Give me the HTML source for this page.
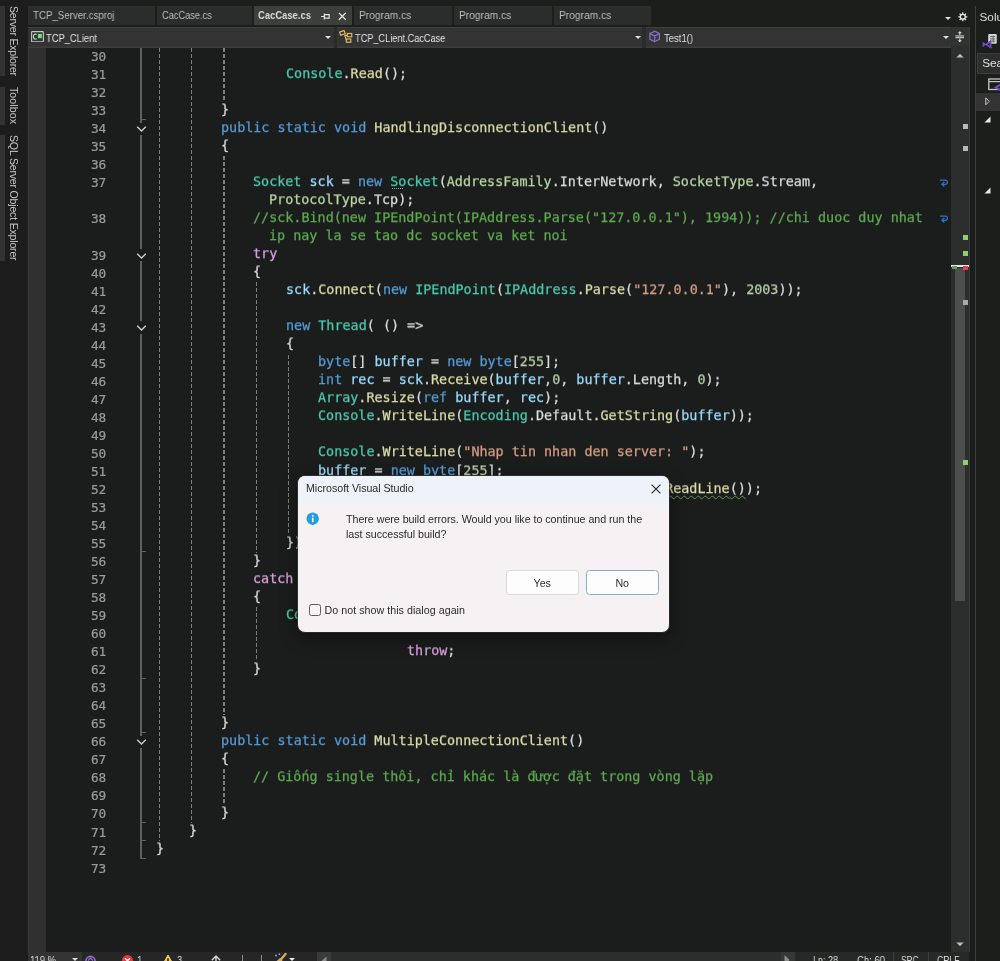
<!DOCTYPE html>
<html lang="en"><head><meta charset="utf-8"><title>Microsoft Visual Studio</title>
<style>
*{box-sizing:border-box;margin:0;padding:0}
html,body{width:1000px;height:961px;overflow:hidden;background:#1b1d1c}
body{position:relative;font-family:"Liberation Sans","DejaVu Sans",sans-serif;color:#d6d6d6;font-size:11.4px}
.abs,.ln,.cl,.g,.ov,.ot,.oc,.tab,.vt,.bar,.nv,.mk,.st{position:absolute}
.tab,.nv,.vt,.st,#dlg,#rp{will-change:transform}
/* shell */
#top{left:0;top:0;width:1000px;height:48px;background:#1c1e1c}
#left{left:0;top:0;width:28px;height:961px;background:#1c1d1c}
.bar{left:0;width:4.8px;background:#323432}
.vt{left:7.3px;width:14px;white-space:nowrap;transform-origin:0 0;transform:translateX(14px) rotate(90deg);color:#c8c8c8;font-size:10.6px;line-height:14px;height:14px}
.tab{top:6.2px;height:19.2px;background:#2a2d2b;color:#bdbdbd;font-size:11px;line-height:19.6px;padding-left:5px;white-space:nowrap;overflow:hidden}
.tx{display:inline-block;transform-origin:0 50%;will-change:transform}
#tb1 .tx{transform:scaleX(.883)}#tb2 .tx{transform:scaleX(.84)}#tb3 .tx{transform:scaleX(.858)}#tb4 .tx,#tb5 .tx,#tb6 .tx{transform:scaleX(.93)}
.nv,.st{transform-origin:0 50%}#nv1{transform:scaleX(.851)}#nv2{transform:scaleX(.835)}#nv3{transform:scaleX(.862)}
#vt1{letter-spacing:-.25px}#vt2{letter-spacing:.07px}#vt3{letter-spacing:-.21px}
#st1{transform:scaleX(.856)}#st2{transform:scaleX(.82)}#st3{transform:scaleX(.864)}#st4{transform:scaleX(.78)}#st5{transform:scaleX(.78)}.st{transform:scaleX(.86)}
.tab.act{background:#3d3f3d;color:#dadada;font-weight:bold;padding-left:4px}
#nav{left:27.5px;top:27px;width:941.5px;height:21px;box-shadow:inset 0 1px 0 #3e403e,inset 0 -1.6px 0 #3c3e3c;background:#333333}
.nv{top:.8px;height:20px;line-height:20px;color:#e4e4e4;font-size:11px;white-space:nowrap}
.dd{position:absolute;width:0;height:0;border-left:3px solid transparent;border-right:3px solid transparent;border-top:3.4px solid #e0e0e0;margin-left:-.3px}
/* editor */
#margin{left:27.5px;top:48px;width:18.5px;height:904px;background:#303030;border-left:1.5px solid #383a38}
.ln{left:60px;width:46.3px;text-align:right;color:#9b9b9b;-webkit-text-stroke:.2px currentColor}
.ln,.cl{font-family:"DejaVu Sans Mono","Liberation Mono",monospace;font-size:13.426px;line-height:18px;height:18px;white-space:pre}
.ln,.cl{will-change:transform;transform-origin:0 13.64px;transform:scaleY(.965)}
.ln{font-size:12.8px;transform:scaleY(1.02)}
.cl{color:#dcdcdc;-webkit-text-stroke:.25px currentColor}
.k{color:#569cd6}.t{color:#4ec9b0}.m{color:#dcdcaa}.v{color:#9cdcfe}.c{color:#5fa953}.s{color:#d69d85}.n{color:#b5cea8}.e{color:#b8d7a3}.p{color:#d8a0df}.d{color:#dcdcdc}
.sq{text-decoration:underline wavy #6a9955 1px;text-underline-offset:1.6px}
.g{width:1.3px;background:repeating-linear-gradient(to bottom,#7e807e 0,#7e807e 4px,transparent 4px,transparent 6px)}
.ov{left:140.3px;width:1.3px;background:#5e605e}
.ot{left:140.3px;width:6px;height:1.2px;background:#5e605e}
.oc{left:135.5px}
/* scrollbar */
#vsb{left:951px;top:48px;width:17.5px;height:904px;background:#2b2e2c}
#vsbr{left:968.5px;top:27px;width:1px;height:925px;background:#3a3a3a}
.mk{left:963px;width:5px;height:5px}
/* right panel */
#rp{left:974.6px;top:6px;width:25.4px;height:955px;background:#1c1e1c;border-left:1.4px solid #3c3e3c}
/* bottom */
#bot{left:28px;top:952px;width:941px;height:9px;background:#262626}
.st{top:953.8px;font-size:11px;line-height:13px;color:#dedede;white-space:nowrap}
/* dialog */
#dlg{left:298px;top:476.2px;width:371px;height:156.2px;background:#f6f2f4;border-radius:7px;overflow:hidden;color:#2b2b2b;box-shadow:0 0 0 1px rgba(60,60,60,.55),0 6px 18px rgba(0,0,0,.45)}
#dlg .ttl{position:absolute;left:0;top:0;width:100%;height:27px;background:#eef3f9}
#dlg .tt{position:absolute;left:8px;top:5px;font-size:10.7px;letter-spacing:-.04px;line-height:14px;white-space:nowrap}
#dlg .msg{position:absolute;left:48px;top:36px;font-size:10.7px;letter-spacing:-.03px;line-height:15px;white-space:nowrap}
.btn{position:absolute;top:94.3px;height:24.5px;background:#fdfdfd;border:1px solid #d9d9d9;border-radius:3.5px;font-size:10.7px;line-height:25.2px;text-align:center;color:#2b2b2b}
#cb{position:absolute;left:11px;top:127.5px;width:12px;height:12px;border:1px solid #5c5c5c;border-radius:2.5px;background:#f8f6f7}
#cbt{position:absolute;left:26.5px;top:127px;font-size:10.7px;letter-spacing:.03px;line-height:14px;white-space:nowrap}
</style></head>
<body>
<div id="top" class="abs"></div>
<div id="left" class="abs">
  <div class="bar" style="top:6px;height:70px"></div>
  <div class="bar" style="top:86.7px;height:38px"></div>
  <div class="bar" style="top:134.5px;height:126px"></div>
  <div class="vt" id="vt1" style="top:6px">Server Explorer</div>
  <div class="vt" id="vt2" style="top:87px">Toolbox</div>
  <div class="vt" id="vt3" style="top:134.8px">SQL Server Object Explorer</div>
</div>
<!-- tabs -->
<div class="tab" id="tb1" style="left:28px;width:127px"><span class="tx">TCP_Server.csproj</span></div>
<div class="tab" id="tb2" style="left:157px;width:95px"><span class="tx">CacCase.cs</span></div>
<div class="tab act" id="tb3" style="left:254px;width:97.5px"><span class="tx">CacCase.cs</span>
  <svg class="abs" style="left:67.3px;top:5.6px" width="9" height="9" viewBox="0 0 9 9"><path d="M0 4.5H3.4 M3.4 1.6V7.4 M3.4 2.6H8.2V6.2H3.4" fill="none" stroke="#e4e4e4" stroke-width="1.2"/></svg>
  <svg class="abs" style="left:84px;top:6.2px" width="8.6" height="8.6" viewBox="0 0 10 10"><path d="M1 1L9 9M9 1L1 9" fill="none" stroke="#ececec" stroke-width="1.5"/></svg>
</div>
<div class="tab" id="tb4" style="left:353.5px;width:98px"><span class="tx">Program.cs</span></div>
<div class="tab" id="tb5" style="left:453.5px;width:98px"><span class="tx">Program.cs</span></div>
<div class="tab" id="tb6" style="left:553.5px;width:97px"><span class="tx">Program.cs</span></div>
<div class="dd abs" style="left:945px;top:17px"></div>
<svg class="abs" style="left:958px;top:12px" width="9.6" height="9.6" viewBox="0 0 12 12"><circle cx="6" cy="6" r="3.1" fill="none" stroke="#e6e6e6" stroke-width="1.7"/><g stroke="#e6e6e6" stroke-width="1.6"><path d="M6 0.4V2.4M6 9.6V11.6M0.4 6H2.4M9.6 6H11.6M2 2L3.4 3.4M8.6 8.6L10 10M2 10L3.4 8.6M8.6 3.4L10 2"/></g></svg>
<!-- nav bar -->
<div id="nav" class="abs">
  <svg class="abs" style="left:3.4px;top:3.8px" width="13" height="11.4" viewBox="0 0 13 11.4"><rect x="0.6" y="0.6" width="11.8" height="10.2" rx="0.8" fill="#2c3a2e" stroke="#c2c8c2" stroke-width="1.1"/><path d="M5.6 3.6C3.4 2.4 2.4 4 2.4 5.6C2.4 7.4 3.6 8.8 5.6 7.7" fill="none" stroke="#c9d9ca" stroke-width="1.1"/><rect x="6.9" y="2.9" width="3.9" height="4.3" fill="#86d78b"/></svg>
  <div class="nv" id="nv1" style="left:18.5px">TCP_CLient</div>
  <div class="dd" style="left:298px;top:8.8px"></div>
  <div class="abs" style="left:306.5px;top:0;width:3px;height:21px;background:#2a2a2a"></div>
  <svg class="abs" style="left:311px;top:3px" width="14.5" height="13.5" viewBox="0 0 15 14"><g fill="none" stroke="#e0b96a" stroke-width="1.2"><rect x="1" y="1.2" width="5" height="3.6" transform="rotate(-20 3.5 3)"/><rect x="8.6" y="3.6" width="4.6" height="3.4"/><rect x="7.6" y="9.3" width="4.6" height="3.4"/><path d="M5.5 5.5L8.6 5.5M6 6L8 11"/></g></svg>
  <div class="nv" id="nv2" style="left:327px">TCP_CLient.CacCase</div>
  <div class="dd" style="left:607.6px;top:8.8px"></div>
  <div class="abs" style="left:614.6px;top:0;width:3.8px;height:21px;background:#2b2b2b"></div>
  <svg class="abs" style="left:621.3px;top:3.2px" width="11.4" height="12.8" viewBox="0 0 13 14"><g fill="none" stroke="#8b76ba" stroke-width="1.3" stroke-linejoin="round"><path d="M6.5 1L12 3.8V10.2L6.5 13L1 10.2V3.8Z" fill="#3c3656"/><path d="M1 3.8L6.5 6.6L12 3.8M6.5 6.6V13"/></g></svg>
  <div class="nv" id="nv3" style="left:636px">Test1()</div>
  <div class="dd" style="left:915.6px;top:8.8px"></div>
  <div class="abs" style="left:923.5px;top:0;width:17.5px;height:19.4px;background:#313331"></div><div class="abs" style="left:923.5px;top:19.4px;width:17.5px;height:2px;background:#2b2e2c"></div>
  <svg class="abs" style="left:927.5px;top:4px" width="9.5" height="11.5" viewBox="0 0 11 13"><g fill="#dcdcdc"><rect x="0.5" y="5" width="10" height="1.2"/><rect x="0.5" y="7" width="10" height="1.2"/><rect x="5" y="0.8" width="1.2" height="3.6"/><rect x="5" y="8.6" width="1.2" height="3.6"/><path d="M5.6 0L8 2.4H3.2Z"/><path d="M5.6 13L8 10.6H3.2Z"/></g></svg>
</div>
<!-- editor -->
<div id="margin" class="abs"></div>
<div class="g" style="left:158.7px;top:48.0px;height:793.3px"></div><div class="g" style="left:191.0px;top:48.0px;height:775.3px"></div><div class="g" style="left:223.4px;top:48.0px;height:54.1px"></div><div class="g" style="left:223.4px;top:156.2px;height:558.9px"></div><div class="g" style="left:223.4px;top:769.2px;height:36.1px"></div><div class="g" style="left:255.7px;top:282.4px;height:270.5px"></div><div class="g" style="left:255.7px;top:606.9px;height:54.1px"></div><div class="g" style="left:288.0px;top:354.5px;height:180.3px"></div>
<div class="ov" style="top:48.0px;height:75.1px"></div><div class="ov" style="top:135.1px;height:114.2px"></div><div class="ov" style="top:261.3px;height:60.1px"></div><div class="ov" style="top:333.5px;height:402.7px"></div><div class="ov" style="top:748.1px;height:110.2px"></div><div class="ot" style="top:118.6px"></div><div class="ot" style="top:551.3px"></div><div class="ot" style="top:677.5px"></div><div class="ot" style="top:731.6px"></div><div class="ot" style="top:821.8px"></div><div class="ot" style="top:839.8px"></div><div class="ot" style="top:857.9px"></div><svg class="oc" style="top:125.4px" width="11" height="8" viewBox="0 0 11 8"><path d="M1.2 1.8 L5.5 6 L9.8 1.8" fill="none" stroke="#d0d0d0" stroke-width="1.3"/></svg><svg class="oc" style="top:251.6px" width="11" height="8" viewBox="0 0 11 8"><path d="M1.2 1.8 L5.5 6 L9.8 1.8" fill="none" stroke="#d0d0d0" stroke-width="1.3"/></svg><svg class="oc" style="top:323.8px" width="11" height="8" viewBox="0 0 11 8"><path d="M1.2 1.8 L5.5 6 L9.8 1.8" fill="none" stroke="#d0d0d0" stroke-width="1.3"/></svg><svg class="oc" style="top:738.4px" width="11" height="8" viewBox="0 0 11 8"><path d="M1.2 1.8 L5.5 6 L9.8 1.8" fill="none" stroke="#d0d0d0" stroke-width="1.3"/></svg>
<div class="ln" style="top:48.21px">30</div>
<div class="ln" style="top:66.24px">31</div>
<div class="cl" style="top:64.84px;left:285.53px"><span class="t">Console</span><span class="d">.</span><span class="m">Read</span><span class="d">();</span></div>
<div class="ln" style="top:84.27px">32</div>
<div class="ln" style="top:102.30px">33</div>
<div class="cl" style="top:100.90px;left:220.86px"><span class="d">}</span></div>
<div class="ln" style="top:120.33px">34</div>
<div class="cl" style="top:118.93px;left:220.86px"><span class="k">public static void </span><span class="m">HandlingDisconnectionClient</span><span class="d">()</span></div>
<div class="ln" style="top:138.36px">35</div>
<div class="cl" style="top:136.96px;left:220.86px"><span class="d">{</span></div>
<div class="ln" style="top:156.39px">36</div>
<div class="ln" style="top:174.42px">37</div>
<div class="cl" style="top:173.02px;left:253.20px"><span class="t">Socket</span><span class="d"> </span><span class="v">sck</span><span class="d"> = </span><span class="k">new</span><span class="d"> </span><span class="t">Socket</span><span class="d">(</span><span class="e">AddressFamily</span><span class="d">.InterNetwork, </span><span class="e">SocketType</span><span class="d">.Stream,</span></div>
<div class="cl" style="top:191.05px;left:269.36px"><span class="e">ProtocolType</span><span class="d">.Tcp);</span></div>
<div class="ln" style="top:210.48px">38</div>
<div class="cl" style="top:209.08px;left:253.20px"><span class="c">//sck.Bind(new IPEndPoint(IPAddress.Parse("127.0.0.1"), 1994)); //chi duoc duy nhat</span></div>
<div class="cl" style="top:227.11px;left:269.36px"><span class="c">ip nay la se tao dc socket va ket noi</span></div>
<div class="ln" style="top:246.54px">39</div>
<div class="cl" style="top:245.14px;left:253.20px"><span class="p">try</span></div>
<div class="ln" style="top:264.57px">40</div>
<div class="cl" style="top:263.17px;left:253.20px"><span class="d">{</span></div>
<div class="ln" style="top:282.60px">41</div>
<div class="cl" style="top:281.20px;left:285.53px"><span class="v">sck</span><span class="d">.</span><span class="m">Connect</span><span class="d">(</span><span class="k">new</span><span class="d"> </span><span class="t">IPEndPoint</span><span class="d">(</span><span class="t">IPAddress</span><span class="d">.</span><span class="m">Parse</span><span class="d">(</span><span class="s">"127.0.0.1"</span><span class="d">), </span><span class="n">2003</span><span class="d">));</span></div>
<div class="ln" style="top:300.63px">42</div>
<div class="ln" style="top:318.66px">43</div>
<div class="cl" style="top:317.26px;left:285.53px"><span class="k">new</span><span class="d"> </span><span class="t">Thread</span><span class="d">( () =&gt;</span></div>
<div class="ln" style="top:336.69px">44</div>
<div class="cl" style="top:335.29px;left:285.53px"><span class="d">{</span></div>
<div class="ln" style="top:354.72px">45</div>
<div class="cl" style="top:353.32px;left:317.86px"><span class="k">byte</span><span class="d">[] </span><span class="v">buffer</span><span class="d"> = </span><span class="k">new byte</span><span class="d">[</span><span class="n">255</span><span class="d">];</span></div>
<div class="ln" style="top:372.75px">46</div>
<div class="cl" style="top:371.35px;left:317.86px"><span class="k">int</span><span class="d"> </span><span class="v">rec</span><span class="d"> = </span><span class="v">sck</span><span class="d">.</span><span class="m">Receive</span><span class="d">(</span><span class="v">buffer</span><span class="d">,</span><span class="n">0</span><span class="d">, </span><span class="v">buffer</span><span class="d">.Length, </span><span class="n">0</span><span class="d">);</span></div>
<div class="ln" style="top:390.78px">47</div>
<div class="cl" style="top:389.38px;left:317.86px"><span class="t">Array</span><span class="d">.</span><span class="m">Resize</span><span class="d">(</span><span class="k">ref</span><span class="d"> </span><span class="v">buffer</span><span class="d">, </span><span class="v">rec</span><span class="d">);</span></div>
<div class="ln" style="top:408.81px">48</div>
<div class="cl" style="top:407.41px;left:317.86px"><span class="t">Console</span><span class="d">.</span><span class="m">WriteLine</span><span class="d">(</span><span class="t">Encoding</span><span class="d">.Default.</span><span class="m">GetString</span><span class="d">(</span><span class="v">buffer</span><span class="d">));</span></div>
<div class="ln" style="top:426.84px">49</div>
<div class="ln" style="top:444.87px">50</div>
<div class="cl" style="top:443.47px;left:317.86px"><span class="t">Console</span><span class="d">.</span><span class="m">WriteLine</span><span class="d">(</span><span class="s">"Nhap tin nhan den server: "</span><span class="d">);</span></div>
<div class="ln" style="top:462.90px">51</div>
<div class="cl" style="top:461.50px;left:317.86px"><span class="v">buffer</span><span class="d"> = </span><span class="k">new byte</span><span class="d">[</span><span class="n">255</span><span class="d">];</span></div>
<div class="ln" style="top:480.93px">52</div>
<div class="cl" style="top:479.53px;left:317.86px"><span class="v">buffer</span><span class="d"> = </span><span class="t">Encoding</span><span class="d">.Default.</span><span class="m">GetBytes</span><span class="d">(</span><span class="t">Console</span><span class="d">.</span><span class="m sq">ReadLine</span><span class="d sq">()</span><span class="d">);</span></div>
<div class="ln" style="top:498.96px">53</div>
<div class="cl" style="top:497.56px;left:317.86px"><span class="v">sck</span><span class="d">.</span><span class="m">Send</span><span class="d">(</span><span class="v">buffer</span><span class="d">);</span></div>
<div class="ln" style="top:516.99px">54</div>
<div class="ln" style="top:535.02px">55</div>
<div class="cl" style="top:533.62px;left:285.53px"><span class="d">}).</span><span class="m">Start</span><span class="d">();</span></div>
<div class="ln" style="top:553.05px">56</div>
<div class="cl" style="top:551.65px;left:253.20px"><span class="d">}</span></div>
<div class="ln" style="top:571.08px">57</div>
<div class="cl" style="top:569.68px;left:253.20px"><span class="p">catch</span><span class="d"> (</span><span class="t">Exception</span><span class="d"> </span><span class="v">ex</span><span class="d">)</span></div>
<div class="ln" style="top:589.11px">58</div>
<div class="cl" style="top:587.71px;left:253.20px"><span class="d">{</span></div>
<div class="ln" style="top:607.14px">59</div>
<div class="cl" style="top:605.74px;left:285.53px"><span class="t">Console</span><span class="d">.</span><span class="m">WriteLine</span><span class="d">(</span><span class="v">ex</span><span class="d">.Message);</span></div>
<div class="ln" style="top:625.17px">60</div>
<div class="ln" style="top:643.20px">61</div>
<div class="cl" style="top:641.80px;left:406.77px"><span class="p">throw</span><span class="d">;</span></div>
<div class="ln" style="top:661.23px">62</div>
<div class="cl" style="top:659.83px;left:253.20px"><span class="d">}</span></div>
<div class="ln" style="top:679.26px">63</div>
<div class="ln" style="top:697.29px">64</div>
<div class="ln" style="top:715.32px">65</div>
<div class="cl" style="top:713.92px;left:220.86px"><span class="d">}</span></div>
<div class="ln" style="top:733.35px">66</div>
<div class="cl" style="top:731.95px;left:220.86px"><span class="k">public static void </span><span class="m">MultipleConnectionClient</span><span class="d">()</span></div>
<div class="ln" style="top:751.38px">67</div>
<div class="cl" style="top:749.98px;left:220.86px"><span class="d">{</span></div>
<div class="ln" style="top:769.41px">68</div>
<div class="cl" style="top:768.01px;left:253.20px"><span class="c">// Giống single thôi, chỉ khác là được đặt trong vòng lặp</span></div>
<div class="ln" style="top:787.44px">69</div>
<div class="ln" style="top:805.47px">70</div>
<div class="cl" style="top:804.07px;left:220.86px"><span class="d">}</span></div>
<div class="ln" style="top:823.50px">71</div>
<div class="cl" style="top:822.10px;left:188.53px"><span class="d">}</span></div>
<div class="ln" style="top:841.53px">72</div>
<div class="cl" style="top:840.13px;left:156.20px"><span class="d">}</span></div>
<div class="ln" style="top:859.56px">73</div>
<!-- word wrap glyphs -->
<svg class="abs" style="left:938.8px;top:177.5px" width="10.5" height="9.5" viewBox="0 0 11 10"><path d="M1 2.2H6.5C9.6 2.2 9.6 6.6 6.5 6.6H3.4M5.6 4.2L3 6.6L5.6 9" fill="none" stroke="#2677c8" stroke-width="1.3"/></svg>
<svg class="abs" style="left:938.8px;top:213.5px" width="10.5" height="9.5" viewBox="0 0 11 10"><path d="M1 2.2H6.5C9.6 2.2 9.6 6.6 6.5 6.6H3.4M5.6 4.2L3 6.6L5.6 9" fill="none" stroke="#2677c8" stroke-width="1.3"/></svg>
<!-- dotted suggestion under "So" -->
<div class="abs" style="left:392px;top:188.4px;width:10.5px;height:0;border-top:1.6px dotted #a8a8a8"></div>
<!-- scrollbar -->
<div id="vsb" class="abs"></div>
<div id="vsbr" class="abs"></div>
<div class="abs" style="left:955px;top:267.5px;width:9.5px;height:333px;background:#4d4f4e"></div>
<div class="abs" style="left:951px;top:265px;width:17.5px;height:2px;background:#e8e8e8"></div>
<div class="abs" style="left:952px;top:266px;width:5px;height:3px;background:#59a84f"></div>
<div class="abs" style="left:962.5px;top:265.5px;width:5.5px;height:4px;background:#e0434a"></div>
<div class="mk" style="top:123.5px;background:#b9b9b9"></div>
<div class="mk" style="top:145.5px;background:#b9b9b9"></div>
<div class="mk" style="top:235px;background:#8fd06a"></div>
<div class="mk" style="top:251px;background:#8fd06a"></div>
<div class="mk" style="top:299.5px;background:#a9a9a9"></div>
<div class="mk" style="top:459.5px;background:#8fd06a"></div>
<svg class="abs" style="left:956px;top:52.5px" width="8" height="5" viewBox="0 0 10 6"><path d="M0.5 5.5L5 0.8L9.5 5.5Z" fill="#bdbdbd"/></svg>
<svg class="abs" style="left:956px;top:941.5px" width="8" height="5" viewBox="0 0 10 6"><path d="M0.5 0.5L5 5.2L9.5 0.5Z" fill="#bdbdbd"/></svg>
<!-- right panel -->
<div id="rp" class="abs">
  <div class="abs" style="left:3.5px;top:4px;font-size:11.8px;line-height:14px;color:#dcdcdc;white-space:nowrap">Solution Explorer</div>
  <svg class="abs" style="left:4.5px;top:26.5px" width="19" height="18" viewBox="0 0 19 18"><rect x="7.2" y="1" width="8.6" height="9.8" rx="1.2" fill="#d4d4d4"/><path d="M9 3.6H14.2M9 5.9H14.2M9 8.2H14.2M12.2 2.6V9.4" stroke="#5a5a5a" stroke-width="0.9"/><path d="M2 9.4L4.8 11.4L2 13.4Z M10 7.6V15.2L4.4 11.4Z" fill="#6f4cc0" stroke="#6f4cc0" stroke-width="1" stroke-linejoin="round"/><path d="M8.6 9.9V12.9L6.4 11.4Z" fill="#1c1e1c"/></svg>
  <div class="abs" style="left:1px;top:47px;width:24px;height:21px;background:#2e2e2e;border:1px solid #3c3c3c"></div>
  <div class="abs" style="left:6.2px;top:50.3px;font-size:11.8px;line-height:14px;color:#e0e0e0;white-space:nowrap">Search Solution Explorer</div>
  <svg class="abs" style="left:12px;top:72px" width="13" height="14" viewBox="0 0 13 14"><rect x="0.8" y="1" width="12" height="10.5" fill="none" stroke="#c8c8c8" stroke-width="1.3"/><path d="M0.8 3.6H13" stroke="#c8c8c8" stroke-width="1.2"/><path d="M13 6.4L7.6 9.4L13 12.4" fill="none" stroke="#6f4cc0" stroke-width="1.8"/></svg>
  <div class="abs" style="left:0;top:87px;width:25px;height:17.5px;background:#333333"></div>
  <svg class="abs" style="left:8.6px;top:90.7px" width="5.2" height="8.6" viewBox="0 0 7 12"><path d="M1 1.2L5.8 6L1 10.8Z" fill="none" stroke="#e0e0e0" stroke-width="1.2"/></svg>
  <svg class="abs" style="left:8.3px;top:109.7px" width="7" height="7" viewBox="0 0 7 7"><path d="M6.5 0.5V6.5H0.5Z" fill="#e8e8e8"/></svg>
  <svg class="abs" style="left:8.3px;top:181px" width="7" height="7" viewBox="0 0 7 7"><path d="M6.5 0.5V6.5H0.5Z" fill="#e8e8e8"/></svg>
</div>
<!-- bottom bar -->
<div id="bot" class="abs">
  <div class="abs" style="left:0;top:0;width:54px;height:9px;background:#333333"></div>
  <div class="abs" style="left:289px;top:0;width:14px;height:9px;background:#3a3a3a"></div>
  <div class="abs" style="left:303px;top:0;width:450px;height:9px;background:#2b2e2c"></div><div class="abs" style="left:753px;top:0;width:14px;height:9px;background:#363836"></div>
  <div class="abs" style="left:767px;top:0;width:174px;height:9px;background:#272927"></div>
</div>
<div class="st" id="st1" style="left:30px">119 %</div>
<div class="dd abs" style="left:72.5px;top:958px;border-top-color:#dcdcdc"></div>
<svg class="abs" style="left:84px;top:954px" width="13" height="8" viewBox="0 0 13 8"><circle cx="6.5" cy="7" r="4.6" fill="none" stroke="#8f6fd0" stroke-width="1.6"/><path d="M4 6.5L6.5 4L9 6.5" fill="none" stroke="#8f6fd0" stroke-width="1.2"/></svg>
<svg class="abs" style="left:121px;top:954px" width="13" height="8" viewBox="0 0 13 8"><circle cx="6.5" cy="6.6" r="5.6" fill="#e5383f"/><path d="M4 4.2L9 9.2M9 4.2L4 9.2" stroke="#fff" stroke-width="1.5"/></svg>
<div class="st" style="left:136.5px">1</div>
<svg class="abs" style="left:161px;top:954px" width="14" height="8" viewBox="0 0 14 8"><path d="M7 1L13.5 12.5H0.5Z" fill="#f0c35a" stroke="#f0c35a" stroke-width="1" stroke-linejoin="round"/><path d="M7 4.5V9" stroke="#222" stroke-width="1.6"/></svg>
<div class="st" style="left:177px">3</div>
<svg class="abs" style="left:210px;top:954.5px" width="12" height="8" viewBox="0 0 12 8"><path d="M6 1V8M1.8 5.2L6 1L10.2 5.2" fill="none" stroke="#d8d8d8" stroke-width="1.4"/></svg>
<div class="abs" style="left:241.5px;top:955px;width:1px;height:6px;background:#8a8a8a"></div>
<div class="abs" style="left:260.5px;top:955px;width:1px;height:6px;background:#8a8a8a"></div>
<svg class="abs" style="left:272px;top:952.5px" width="16" height="9" viewBox="0 0 16 9"><path d="M13.5 1L8 7.5" stroke="#d9a860" stroke-width="2.4" stroke-linecap="round"/><path d="M3.5 9L8 5L10.5 7.5L8 10Z" fill="#d9a860"/><circle cx="4" cy="2.6" r="1" fill="#6fa8ff"/><circle cx="7.4" cy="1.2" r="0.9" fill="#6fa8ff"/></svg>
<div class="dd abs" style="left:289.5px;top:957.5px;border-top-color:#f0f0f0"></div>
<svg class="abs" style="left:321px;top:955.5px" width="6" height="6" viewBox="0 0 6 6"><path d="M5.5 0.5V9.5L0.5 5Z" fill="#8c8c8c"/></svg>
<svg class="abs" style="left:784px;top:955px" width="6" height="6" viewBox="0 0 6 6"><path d="M0.5 0V10L5.5 5Z" fill="#8c8c8c"/></svg>
<div class="st" id="st2" style="left:813px">Ln: 28</div>
<div class="st" id="st3" style="left:857px">Ch: 60</div>
<div class="abs" style="left:893px;top:952px;width:1px;height:9px;background:#3c3c3c"></div>
<div class="st" id="st4" style="left:901px">SPC</div>
<div class="abs" style="left:928px;top:952px;width:1px;height:9px;background:#3c3c3c"></div>
<div class="st" id="st5" style="left:937px">CRLF</div>
<!-- dialog -->
<div id="dlg" class="abs">
  <div class="ttl"></div>
  <div class="tt" id="dtt">Microsoft Visual Studio</div>
  <svg class="abs" style="left:352.5px;top:8.3px" width="10" height="10" viewBox="0 0 10 10"><path d="M0.6 0.6L9.4 9.4M9.4 0.6L0.6 9.4" fill="none" stroke="#222" stroke-width="1.1"/></svg>
  <svg class="abs" style="left:8px;top:35.8px" width="13.4" height="13.4" viewBox="0 0 14 14"><circle cx="7" cy="7" r="6.5" fill="#1f9ee3"/><rect x="6.2" y="5.8" width="1.7" height="4.8" rx="0.5" fill="#fff"/><circle cx="7.05" cy="3.9" r="1" fill="#fff"/></svg>
  <div class="msg" id="dmsg">There were build errors. Would you like to continue and run the<br>last successful build?</div>
  <div class="btn" id="byes" style="left:208px;width:72.5px">Yes</div>
  <div class="btn" id="bno" style="left:287.5px;width:73.5px;border-color:#86aecb">No</div>
  <div id="cb"></div>
  <div id="cbt">Do not show this dialog again</div>
</div>
</body></html>
